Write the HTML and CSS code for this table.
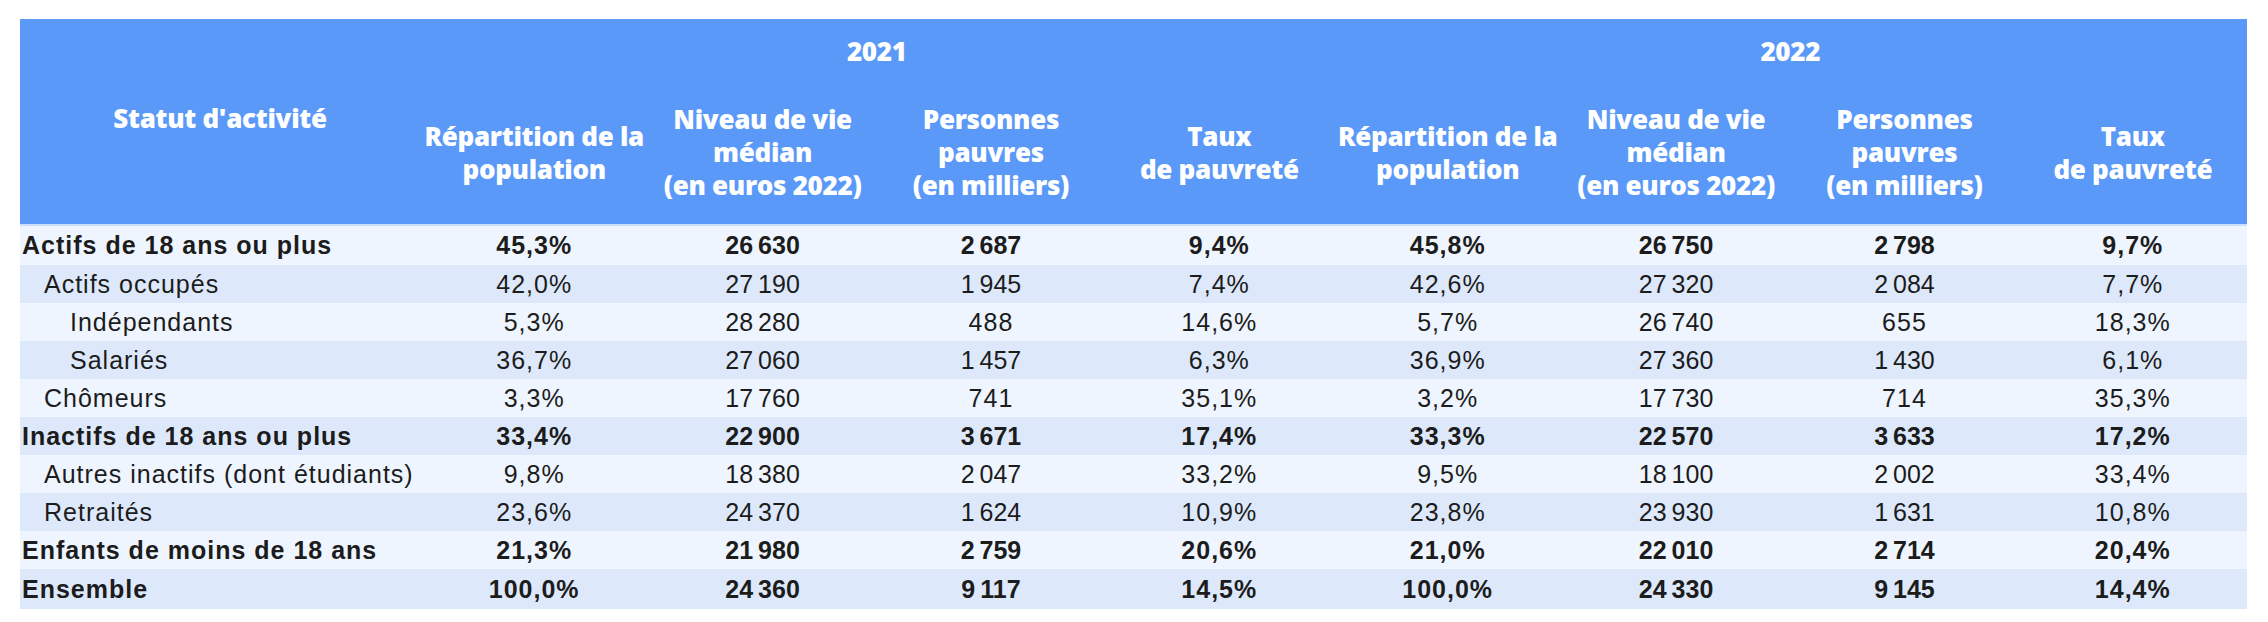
FILE: index.html
```html
<!DOCTYPE html>
<html lang="fr">
<head>
<meta charset="utf-8">
<title>Statut d'activité</title>
<link rel="stylesheet" href="styles.css">
</head>
<body>
<div class="wrap">
<table class="tbl">
  <colgroup>
    <col class="c-label">
    <col class="c-num"><col class="c-num"><col class="c-num"><col class="c-num">
    <col class="c-num"><col class="c-num"><col class="c-num"><col class="c-num">
  </colgroup>
  <thead>
    <tr class="h-year">
      <th rowspan="2" class="h-stat">Statut d'activité</th>
      <th colspan="4">2021</th>
      <th colspan="4">2022</th>
    </tr>
    <tr class="h-cols">
      <th>Répartition de la<br>population</th>
      <th>Niveau de vie<br>médian<br>(en euros 2022)</th>
      <th>Personnes<br>pauvres<br>(en milliers)</th>
      <th>Taux<br>de pauvreté</th>
      <th>Répartition de la<br>population</th>
      <th>Niveau de vie<br>médian<br>(en euros 2022)</th>
      <th>Personnes<br>pauvres<br>(en milliers)</th>
      <th>Taux<br>de pauvreté</th>
    </tr>
  </thead>
  <tbody>
    <tr class="r-light b first"><td class="lbl l0">Actifs de 18 ans ou plus</td><td>45,3%</td><td>26&#8239;630</td><td>2&#8239;687</td><td>9,4%</td><td>45,8%</td><td>26&#8239;750</td><td>2&#8239;798</td><td>9,7%</td></tr>
    <tr class="r-dark"><td class="lbl l1">Actifs occupés</td><td>42,0%</td><td>27&#8239;190</td><td>1&#8239;945</td><td>7,4%</td><td>42,6%</td><td>27&#8239;320</td><td>2&#8239;084</td><td>7,7%</td></tr>
    <tr class="r-light"><td class="lbl l2">Indépendants</td><td>5,3%</td><td>28&#8239;280</td><td>488</td><td>14,6%</td><td>5,7%</td><td>26&#8239;740</td><td>655</td><td>18,3%</td></tr>
    <tr class="r-dark"><td class="lbl l2">Salariés</td><td>36,7%</td><td>27&#8239;060</td><td>1&#8239;457</td><td>6,3%</td><td>36,9%</td><td>27&#8239;360</td><td>1&#8239;430</td><td>6,1%</td></tr>
    <tr class="r-light"><td class="lbl l1">Chômeurs</td><td>3,3%</td><td>17&#8239;760</td><td>741</td><td>35,1%</td><td>3,2%</td><td>17&#8239;730</td><td>714</td><td>35,3%</td></tr>
    <tr class="r-dark b"><td class="lbl l0">Inactifs de 18 ans ou plus</td><td>33,4%</td><td>22&#8239;900</td><td>3&#8239;671</td><td>17,4%</td><td>33,3%</td><td>22&#8239;570</td><td>3&#8239;633</td><td>17,2%</td></tr>
    <tr class="r-light"><td class="lbl l1">Autres inactifs (dont étudiants)</td><td>9,8%</td><td>18&#8239;380</td><td>2&#8239;047</td><td>33,2%</td><td>9,5%</td><td>18&#8239;100</td><td>2&#8239;002</td><td>33,4%</td></tr>
    <tr class="r-dark"><td class="lbl l1">Retraités</td><td>23,6%</td><td>24&#8239;370</td><td>1&#8239;624</td><td>10,9%</td><td>23,8%</td><td>23&#8239;930</td><td>1&#8239;631</td><td>10,8%</td></tr>
    <tr class="r-light b"><td class="lbl l0">Enfants de moins de 18 ans</td><td>21,3%</td><td>21&#8239;980</td><td>2&#8239;759</td><td>20,6%</td><td>21,0%</td><td>22&#8239;010</td><td>2&#8239;714</td><td>20,4%</td></tr>
    <tr class="r-dark b last"><td class="lbl l0">Ensemble</td><td>100,0%</td><td>24&#8239;360</td><td>9&#8239;117</td><td>14,5%</td><td>100,0%</td><td>24&#8239;330</td><td>9&#8239;145</td><td>14,4%</td></tr>
  </tbody>
</table>
</div>
</body>
</html>
```

FILE: styles.css
```css
html, body {
  margin: 0;
  padding: 0;
  background: #ffffff;
}

.wrap {
  padding: 19px 20px 0 20px;
}

.tbl {
  border-collapse: collapse;
  border-spacing: 0;
  table-layout: fixed;
  width: 2227px;
}

.c-label { width: 400px; }
.c-num { width: 228.375px; }

.tbl th {
  background: #5b99f9;
  color: #ffffff;
  font-family: "Open Sans", Lato, sans-serif;
  font-weight: 800;
  font-size: 26px;
  line-height: 33px;
  letter-spacing: -0.3px;
  text-align: center;
  vertical-align: middle;
  padding: 0;
}

.h-year { height: 66px; }
.h-year th { padding-bottom: 2px; }
.h-cols { height: 140px; }
.h-cols th { padding-bottom: 4px; }
.h-stat { padding-bottom: 6px !important; }

.tbl td {
  font-family: "Liberation Sans", Arial, sans-serif;
  font-size: 25px;
  letter-spacing: 1px;
  color: #1c1c1c;
  text-align: center;
  vertical-align: middle;
  padding: 0;
  white-space: nowrap;
}

.tbl tbody tr { height: 38px; }
.tbl tbody tr.first { height: 40px; }
.tbl tbody tr.first td { border-top: 2px solid #cadefb; }
.tbl tbody tr.last { height: 40px; }

.r-light td { background: #eef5fe; }
.r-dark td { background: #dde9fb; }

.b td { font-weight: 700; }

.tbl td.lbl { text-align: left; }
.l0 { padding-left: 2px !important; }
.l1 { padding-left: 24px !important; }
.l2 { padding-left: 50px !important; }
```
